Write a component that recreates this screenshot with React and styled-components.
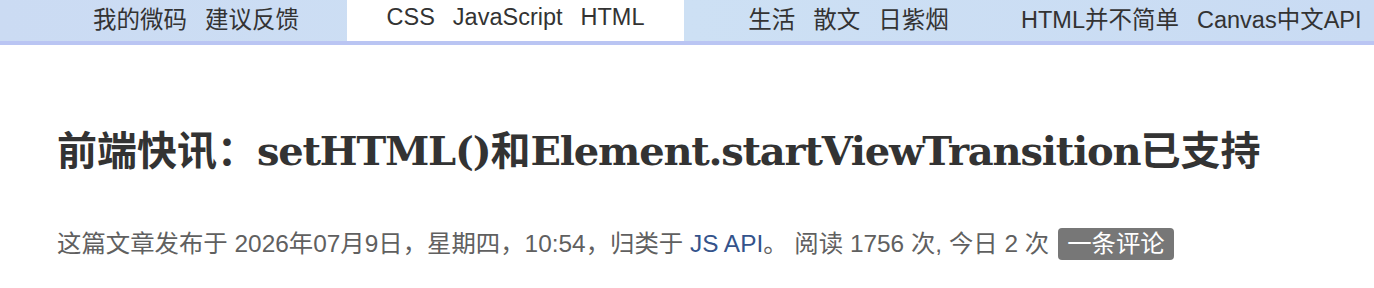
import React from "react";
import styled, { createGlobalStyle } from "styled-components";

const GlobalStyle = createGlobalStyle`
  body {
    margin: 0;
    background: #fff;
    font-family: "Liberation Sans", "Noto Sans CJK SC", sans-serif;
  }
`;

const Nav = styled.nav`
  display: grid;
  grid-template-columns: 347px 337px 337px 1fr;
  height: 41px;
  background: linear-gradient(90deg, #cbdbf3 0%, #cde0f4 50%, #c9dbf3 100%);
  border-bottom: 4px solid #bac5f3;
`;

const NavGroup = styled.div`
  display: flex;
  align-items: center;
  justify-content: center;
  gap: 18px;
  padding: 0 ${(p) => p.$right || 0}px 6px ${(p) => p.$left || 0}px;
  background: ${(p) => (p.$active ? "#fff" : "transparent")};
  font-size: 23.5px;
  color: #333;
`;

const NavLink = styled.a`
  color: inherit;
  text-decoration: none;
  white-space: nowrap;
`;

const Main = styled.main`
  padding: 0 57px;
`;

const Title = styled.h1`
  margin: 77px 0 0;
  font-size: 40px;
  line-height: 52px;
  font-weight: 700;
  color: #333;
  white-space: nowrap;
  font-family: "Noto Sans CJK SC", sans-serif;
`;

const Latin = styled.span`
  font-family: "DejaVu Serif", serif;
  letter-spacing: -1.2px;
`;

const Meta = styled.p`
  display: flex;
  align-items: center;
  margin: 51px 0 0;
  font-size: 24.4px;
  line-height: 32px;
  color: #606060;
  white-space: nowrap;
`;

const Category = styled.a`
  color: #34538b;
  text-decoration: none;
`;

const Badge = styled.a`
  display: inline-block;
  margin-left: 9px;
  padding: 0 9px;
  height: 32px;
  line-height: 32px;
  border-radius: 4px;
  background: #777;
  color: #fff;
  text-decoration: none;
`;

const groups = [
  { items: ["我的微码", "建议反馈"], left: 45 },
  { items: ["CSS", "JavaScript", "HTML"], active: true },
  { items: ["生活", "散文", "日紫烟"], right: 8 },
  { items: ["HTML并不简单", "Canvas中文API"], right: 16 },
];

export default function App() {
  return (
    <>
      <GlobalStyle />
      <Nav>
        {groups.map((g, i) => (
          <NavGroup key={i} $active={g.active} $left={g.left} $right={g.right}>
            {g.items.map((t) => (
              <NavLink key={t}>{t}</NavLink>
            ))}
          </NavGroup>
        ))}
      </Nav>
      <Main>
        <Title>
          前端快讯：<Latin>setHTML()</Latin>和<Latin>Element.startViewTransition</Latin>已支持
        </Title>
        <Meta>
          <span>
            这篇文章发布于 2026年07月9日，星期四，10:54，归类于 <Category>JS API</Category>。 阅读 1756 次, 今日 2 次
          </span>
          <Badge>一条评论</Badge>
        </Meta>
      </Main>
    </>
  );
}
